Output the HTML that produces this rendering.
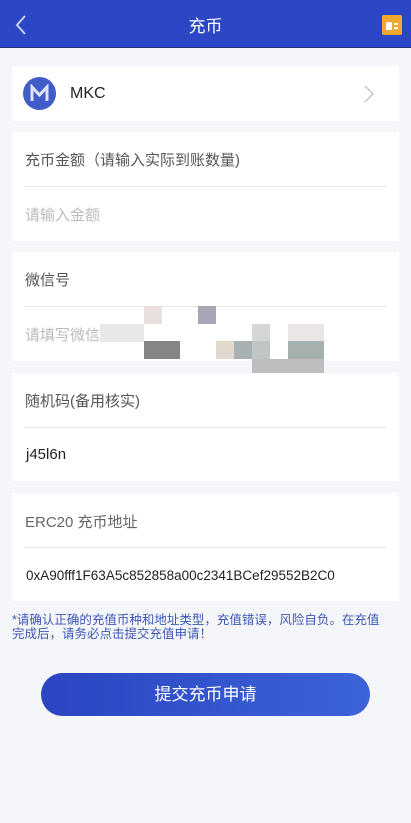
<!DOCTYPE html>
<html><head><meta charset="utf-8"><style>
*{margin:0;padding:0;box-sizing:border-box}
body{width:411px;height:823px;background:#f5f6fa;font-family:"Liberation Sans","Noto Sans CJK SC",sans-serif;position:relative;overflow:hidden}
.hd{position:absolute;left:0;top:0;width:411px;height:48px;background:#2b47c5;border-bottom:1px solid #1f2f80}
.hd .t{position:absolute;left:0;right:0;top:12px;text-align:center;color:#fff;font-size:17px}
.card{position:absolute;left:12px;width:387px;background:#fff}
.lab{position:absolute;left:13px;font-size:15px;color:#555}
.ph{color:#bbb}
.div{position:absolute;left:12px;right:12px;height:1px;background:#e6e6e6}
.m{position:absolute}
</style></head><body>
<div class="hd">
<svg style="position:absolute;left:14px;top:14px" width="14" height="22" viewBox="0 0 14 22"><path d="M11 2 L3 11 L11 20" stroke="#c8d0f0" stroke-width="2" fill="none"/></svg>
<div class="t">充币</div>
<div style="position:absolute;left:382px;top:15px;width:20px;height:20px;background:#f0a930;border-radius:2px"><div style="position:absolute;left:4px;top:7px;width:6px;height:8px;background:#fff;border-radius:1px"></div><div style="position:absolute;left:12px;top:8px;width:4px;height:6px;border-top:2px solid #fff;border-bottom:2px solid #fff"></div></div>
</div>
<div class="card" style="top:66px;height:55px">
<div style="position:absolute;left:11px;top:11px;width:33px;height:33px;border-radius:50%;background:#3f5cc9"></div>
<svg style="position:absolute;left:18px;top:18px" width="19" height="19" viewBox="0 0 19 19"><path d="M2 17 V3 L9.5 11 L17 3 V17" stroke="#dfe4f7" stroke-width="3" fill="none"/></svg>
<div class="lab" style="left:58px;top:19px;font-size:16px;color:#222">MKC</div>
<svg style="position:absolute;left:351px;top:18px" width="12" height="20" viewBox="0 0 12 20"><path d="M2 2 L10 10 L2 18" stroke="#c8c8c8" stroke-width="1.5" fill="none"/></svg>
</div>
<div class="card" style="top:132px;height:109px">
<div class="lab" style="top:17px">充币金额（请输入实际到账数量)</div>
<div class="div" style="top:54px"></div>
<div class="lab ph" style="top:72px">请输入金额</div>
</div>
<div class="card" style="top:252px;height:109px">
<div class="lab" style="top:17px">微信号</div>
<div class="div" style="top:54px"></div>
<div class="lab ph" style="top:72px">请填写微信</div>
</div>
<div class="m" style="left:100px;top:324px;width:44px;height:18px;background:#d8d8d8;opacity:.6"></div>
<div class="m" style="left:144px;top:306px;width:18px;height:18px;background:#e8dfdf"></div>
<div class="m" style="left:198px;top:306px;width:18px;height:18px;background:#a8a6b6"></div>
<div class="m" style="left:144px;top:341px;width:36px;height:18px;background:#858587"></div>
<div class="m" style="left:216px;top:341px;width:18px;height:18px;background:#e0d8cc"></div>
<div class="m" style="left:234px;top:341px;width:18px;height:18px;background:#a8b0b2"></div>
<div class="m" style="left:252px;top:324px;width:18px;height:17px;background:#d6d6d6"></div>
<div class="m" style="left:252px;top:341px;width:18px;height:18px;background:#c0c6c6"></div>
<div class="m" style="left:288px;top:341px;width:36px;height:18px;background:#a6b0ae"></div>
<div class="m" style="left:288px;top:324px;width:36px;height:17px;background:#ebe6e6"></div>
<div class="m" style="left:252px;top:359px;width:72px;height:18px;background:#bdbdbd"></div>
<div class="card" style="top:373px;height:108px">
<div class="lab" style="top:17px">随机码(备用核实)</div>
<div class="div" style="top:54px"></div>
<div class="lab" style="top:73px;left:14px;color:#222">j45l6n</div>
</div>
<div class="card" style="top:493px;height:108px">
<div class="lab" style="top:18px;color:#666">ERC20 充币地址</div>
<div class="div" style="top:54px"></div>
<div class="lab" style="top:75px;left:14px;color:#222;font-size:13.5px">0xA90fff1F63A5c852858a00c2341BCef29552B2C0</div>
</div>
<div style="position:absolute;left:12px;top:613px;width:378px;font-size:12.5px;line-height:14px;color:#3b57b5">*请确认正确的充值币种和地址类型，充值错误，风险自负。在充值完成后，请务必点击提交充值申请！</div>
<div style="position:absolute;left:41px;top:673px;width:329px;height:43px;border-radius:22px;background:linear-gradient(90deg,#2a45c2,#3c63d8);color:#fff;font-size:17px;text-align:center;line-height:43px">提交充币申请</div>
</body></html>
